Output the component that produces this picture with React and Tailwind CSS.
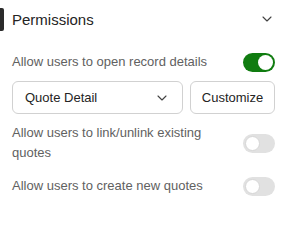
import React, { useState } from 'react';

const Toggle = ({ on, onClick }) => (
    <button
        onClick={onClick}
        className={`relative shrink-0 w-[32px] h-[19px] rounded-full transition-colors ${on ? 'bg-[#107c10]' : 'bg-[#e1e1e1]'}`}
    >
        <span
            className={`absolute top-[2px] w-[15px] h-[15px] rounded-full bg-white ${on ? 'right-[2px]' : 'left-[2px] border border-[#d6d6d6]'}`}
        />
    </button>
);

const Chevron = ({ className }) => (
    <svg className={className} width="10" height="6" viewBox="0 0 10 6" fill="none">
        <path d="M1 1l4 4 4-4" stroke="#424242" strokeWidth="1.1" strokeLinecap="round" strokeLinejoin="round" />
    </svg>
);

const App = () => {
    const [openDetails, setOpenDetails] = useState(true);
    const [linkQuotes, setLinkQuotes] = useState(false);
    const [createQuotes, setCreateQuotes] = useState(false);

    return (
        <div className="w-[294px] h-[241px] bg-white font-['Liberation_Sans',Arial,sans-serif] text-[#616161]">
            <div className="flex items-center h-[37px] pt-[1px]">
                <div className="w-[4px] h-[23px] mt-[1px] bg-[#2b2b2b] rounded-r-[2px]" />
                <h2 className="ml-[8px] text-[15px] text-[#242424] leading-none">Permissions</h2>
                <Chevron className="ml-auto mr-[22px]" />
            </div>

            <div className="px-[12px] pr-[19px] pt-[15px]">
                <div className="flex items-center justify-between h-[20px]">
                    <span className="text-[13px] leading-[20px]">Allow users to open record details</span>
                    <Toggle on={openDetails} onClick={() => setOpenDetails(!openDetails)} />
                </div>

                <div className="flex gap-[7px] mt-[9px] h-[33px]">
                    <button className="flex items-center flex-1 pl-[12px] pr-[15px] border border-[#d1d1d1] rounded-[6px] text-[13px] text-[#242424]">
                        <span>Quote Detail</span>
                        <Chevron className="ml-auto" />
                    </button>
                    <button className="w-[85px] border border-[#d1d1d1] rounded-[6px] text-[13px] text-[#242424]">
                        Customize
                    </button>
                </div>

                <div className="flex items-center justify-between mt-[9px]">
                    <span className="text-[13px] leading-[20px] w-[200px]">Allow users to link/unlink existing quotes</span>
                    <Toggle on={linkQuotes} onClick={() => setLinkQuotes(!linkQuotes)} />
                </div>

                <div className="flex items-center justify-between mt-[13px] h-[20px]">
                    <span className="text-[13px] leading-[20px]">Allow users to create new quotes</span>
                    <Toggle on={createQuotes} onClick={() => setCreateQuotes(!createQuotes)} />
                </div>
            </div>
        </div>
    );
};

export default App;
